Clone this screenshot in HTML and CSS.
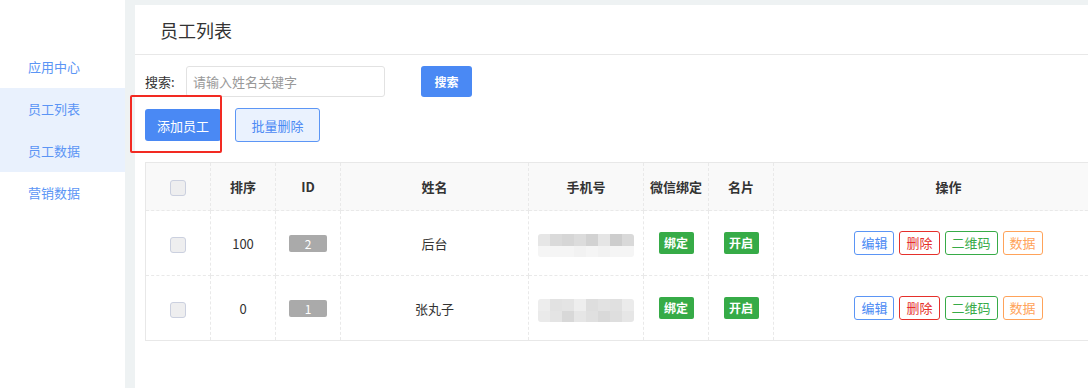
FILE: index.html
```html
<!DOCTYPE html>
<html lang="zh">
<head>
<meta charset="utf-8">
<title>员工列表</title>
<link rel="stylesheet" href="styles.css">
</head>
<body>
<div class="app">
  <aside class="sidebar">
    <a class="nav-item">应用中心</a>
    <div class="nav-group">
      <a class="nav-item">员工列表</a>
      <a class="nav-item">员工数据</a>
    </div>
    <a class="nav-item">营销数据</a>
  </aside>
  <main class="main">
    <section class="panel">
      <header class="panel-head">员工列表</header>
      <div class="panel-body">
        <div class="search-row">
          <label class="search-label">搜索:</label>
          <input class="search-input" type="text" placeholder="请输入姓名关键字">
          <button class="btn btn-search">搜索</button>
        </div>
        <div class="action-row">
          <button class="btn btn-add">添加员工</button>
          <button class="btn btn-batch">批量删除</button>
          <span class="highlight"></span>
        </div>
        <table class="grid">
          <colgroup>
            <col style="width:65px"><col style="width:65px"><col style="width:65px"><col style="width:188px">
            <col style="width:115px"><col style="width:65px"><col style="width:65px"><col style="width:350px">
          </colgroup>
          <thead>
            <tr>
              <th><span class="chk"></span></th>
              <th>排序</th><th>ID</th><th>姓名</th><th>手机号</th><th>微信绑定</th><th>名片</th><th>操作</th>
            </tr>
          </thead>
          <tbody>
            <tr>
              <td><span class="chk"></span></td>
              <td>100</td>
              <td><span class="id-badge">2</span></td>
              <td>后台</td>
              <td><span class="mosaic m1"><i></i><i></i><i></i><i></i><i></i><i></i><i></i><i></i><i></i><i></i><i></i><i></i><i></i><i></i><i></i><i></i></span></td>
              <td><span class="tag-green">绑定</span></td>
              <td><span class="tag-green">开启</span></td>
              <td class="ops"><span class="op op-blue">编辑</span><span class="op op-red">删除</span><span class="op op-green">二维码</span><span class="op op-orange">数据</span></td>
            </tr>
            <tr>
              <td><span class="chk"></span></td>
              <td>0</td>
              <td><span class="id-badge">1</span></td>
              <td>张丸子</td>
              <td><span class="mosaic m2"><i></i><i></i><i></i><i></i><i></i><i></i><i></i><i></i><i></i><i></i><i></i><i></i><i></i><i></i><i></i><i></i></span></td>
              <td><span class="tag-green">绑定</span></td>
              <td><span class="tag-green">开启</span></td>
              <td class="ops"><span class="op op-blue">编辑</span><span class="op op-red">删除</span><span class="op op-green">二维码</span><span class="op op-orange">数据</span></td>
            </tr>
          </tbody>
        </table>
      </div>
    </section>
  </main>
</div>
</body>
</html>
```

FILE: styles.css
```css
* { box-sizing: border-box; }
html, body {
  margin: 0;
  padding: 0;
  width: 1088px;
  height: 388px;
  overflow: hidden;
  background: #fff;
  font-family: "Noto Sans CJK SC", "Liberation Sans", sans-serif;
  font-size: 13px;
  color: #333;
}
.app {
  display: flex;
  height: 388px;
}
.sidebar {
  width: 125px;
  flex: none;
  background: #fff;
  padding-top: 46px;
}
.nav-item {
  display: flex;
  align-items: center;
  height: 42px;
  padding-left: 28px;
  padding-bottom: 1px;
  color: #5b95f5;
  font-size: 13px;
}
.nav-group {
  background: #e9f1fd;
}
.main {
  flex: 1;
  min-width: 0;
  background: #eef2f3;
  padding: 5px 0 0 10px;
  overflow: hidden;
}
.panel {
  background: #fff;
  height: 100%;
  width: 1100px;
}
.panel-head {
  height: 50px;
  padding-left: 25px;
  display: flex;
  align-items: center;
  font-size: 18px;
  color: #333;
  border-bottom: 1px solid #e8e8e8;
}
.panel-body {
  padding: 11px 0 0 10px;
}
.search-row {
  display: flex;
  align-items: center;
  height: 31px;
}
.search-label {
  width: 41px;
  font-size: 13px;
  color: #333;
}
.search-input {
  width: 199px;
  height: 31px;
  border: 1px solid #e2e2e2;
  border-radius: 3px;
  padding: 0 6px;
  font-family: inherit;
  font-size: 13px;
  outline: none;
}
.search-input::placeholder { color: #999; }
.btn {
  font-family: inherit;
  cursor: pointer;
  border-radius: 3px;
  padding: 0;
}
.btn-search {
  margin-left: 36px;
  width: 51px;
  height: 31px;
  background: #4a89f4;
  border: none;
  color: #fff;
  font-size: 12px;
  font-weight: bold;
}
.action-row {
  position: relative;
  display: flex;
  align-items: center;
  margin-top: 11px;
  height: 34px;
}
.btn-add {
  width: 76px;
  height: 32px;
  background: #4a89f4;
  border: none;
  color: #fff;
  font-size: 13px;
}
.btn-batch {
  margin-left: 14px;
  width: 85px;
  height: 34px;
  background: #eaf2fe;
  border: 1px solid #5c96f5;
  color: #4a89f4;
  font-size: 13px;
}
.highlight {
  position: absolute;
  left: -15px;
  top: -13px;
  width: 92px;
  height: 58px;
  border: 2px solid #f22a22;
  border-radius: 2px;
}
.grid {
  margin-top: 20px;
  border-collapse: collapse;
  table-layout: fixed;
  width: 978px;
  border: 1px solid #e8e8e8;
}
.grid th, .grid td {
  border: 1px dashed #e9e9e9;
  text-align: center;
  vertical-align: middle;
  padding: 0;
  font-size: 13px;
  color: #333;
}
.grid th {
  height: 48px;
  background: #f9f9f9;
  font-weight: bold;
}
.grid td { height: 65px; }
.chk {
  display: inline-block;
  width: 16px;
  height: 16px;
  border: 1px solid #cbd0df;
  border-radius: 3px;
  background: #eeeeef;
  vertical-align: middle;
}
.id-badge {
  display: inline-block;
  width: 38px;
  height: 17px;
  line-height: 17px;
  background: #aaa;
  color: #fff;
  border-radius: 2px;
  font-size: 12px;
}
.mosaic {
  display: inline-grid;
  grid-template-columns: repeat(8, 12px);
  grid-template-rows: 12px 11px;
  vertical-align: middle;
  border-radius: 3px;
  overflow: hidden;
  margin-top: 4px;
}
.mosaic i { display: block; }
.m1 i:nth-child(1) { background: #e6e6e6; }
.m1 i:nth-child(2) { background: #dadada; }
.m1 i:nth-child(3) { background: #d6d6d6; }
.m1 i:nth-child(4) { background: #dcdcdc; }
.m1 i:nth-child(5) { background: #d2d2d2; }
.m1 i:nth-child(6) { background: #e5e5e5; }
.m1 i:nth-child(7) { background: #cdcdcd; }
.m1 i:nth-child(8) { background: #d9d9d9; }
.m1 i:nth-child(n+9) { background: #f5f5f5; }
.m1 i:nth-child(12), .m1 i:nth-child(14) { background: #f2f2f2; }
.m2 i:nth-child(1) { background: #ededed; }
.m2 i:nth-child(2) { background: #e2e2e2; }
.m2 i:nth-child(3) { background: #e4e4e4; }
.m2 i:nth-child(4) { background: #eeeeee; }
.m2 i:nth-child(5) { background: #dedede; }
.m2 i:nth-child(6) { background: #e2e2e2; }
.m2 i:nth-child(7) { background: #e0e0e0; }
.m2 i:nth-child(8) { background: #ebebeb; }
.m2 i:nth-child(9) { background: #eaeaea; }
.m2 i:nth-child(10) { background: #e4e4e4; }
.m2 i:nth-child(11) { background: #d8d8d8; }
.m2 i:nth-child(12) { background: #e6e6e6; }
.m2 i:nth-child(13) { background: #e0e0e0; }
.m2 i:nth-child(14) { background: #d9d9d9; }
.m2 i:nth-child(15) { background: #dedede; }
.m2 i:nth-child(16) { background: #e6e6e6; }
.tag-green {
  display: inline-block;
  width: 35px;
  height: 22px;
  line-height: 22px;
  background: #36ab47;
  color: #fff;
  border-radius: 2px;
  font-size: 12px;
  font-weight: bold;
}
.ops {
  white-space: nowrap;
  font-size: 0;
}
.op {
  display: inline-block;
  height: 24px;
  line-height: 22px;
  padding: 0 6px;
  border: 1px solid;
  border-radius: 3px;
  font-size: 13px;
  margin: 0 2.5px;
  background: #fff;
}
.op-blue { color: #4a89f4; border-color: #5b95f5; }
.op-red { color: #e5302b; border-color: #e5302b; }
.op-green { color: #37ab47; border-color: #37ab47; }
.op-orange { color: #ffa35a; border-color: #ffa35a; }
```
